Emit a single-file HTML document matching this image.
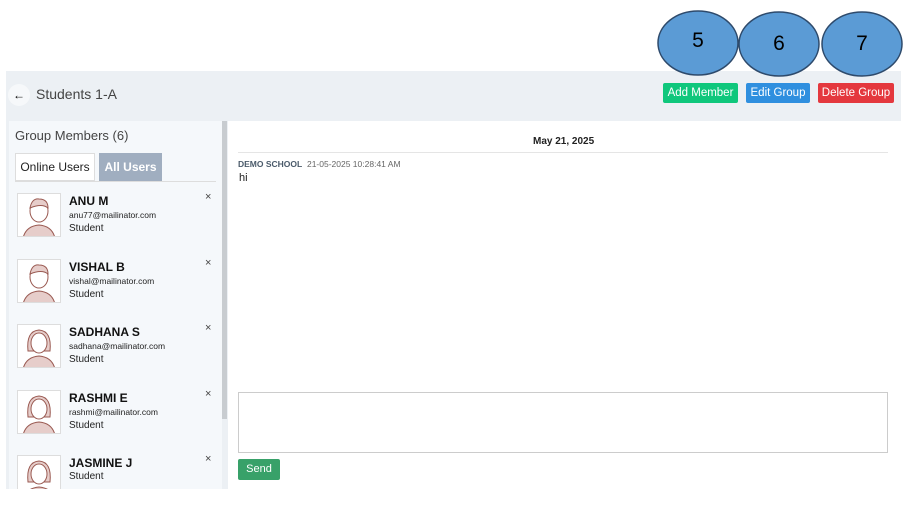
<!DOCTYPE html>
<html><head><style>
*{margin:0;padding:0;box-sizing:border-box}
body{width:911px;height:525px;background:#fff;font-family:"Liberation Sans",sans-serif;position:relative;overflow:hidden}
.a{position:absolute}
.btn{position:absolute;top:83px;height:20px;color:#fff;font-size:11.5px;line-height:20px;text-align:center;border-radius:2px}
.name{font-weight:bold;font-size:12px;color:#111}
.em{font-size:8.5px;color:#222}
.st{font-size:10px;color:#222}
.x{position:absolute;left:205px;font-size:11px;color:#444}
</style></head><body>
<div class="a" style="left:6px;top:71px;width:895px;height:418px;background:#ecf0f4"></div>
<div class="a" style="left:8px;top:84px;width:22px;height:22px;border-radius:50%;background:#f6f8fa;font-size:12px;text-align:center;line-height:22px">&#8592;</div>
<div class="a" style="left:36px;top:86px;font-size:14px;color:#444">Students 1-A</div>
<div class="btn" style="left:663px;width:75px;background:#0fc77c">Add Member</div>
<div class="btn" style="left:746px;width:64px;background:#2f8fdf">Edit Group</div>
<div class="btn" style="left:818px;width:76px;background:#e4383e">Delete Group</div>
<svg class="a" style="left:0;top:0" width="911" height="80">
<ellipse cx="698" cy="43" rx="40" ry="32" fill="#5b9bd5" stroke="#2e4a6b" stroke-width="1.5"/>
<ellipse cx="779" cy="44" rx="40" ry="32" fill="#5b9bd5" stroke="#2e4a6b" stroke-width="1.5"/>
<ellipse cx="862" cy="44" rx="40" ry="32" fill="#5b9bd5" stroke="#2e4a6b" stroke-width="1.5"/>
<text x="698" y="47" font-size="21" text-anchor="middle" font-family="Liberation Sans">5</text>
<text x="779" y="50" font-size="21" text-anchor="middle" font-family="Liberation Sans">6</text>
<text x="862" y="50" font-size="21" text-anchor="middle" font-family="Liberation Sans">7</text>
</svg>
<div class="a" style="left:9px;top:121px;width:213px;height:368px;background:#f5f8fb"></div>
<div class="a" style="left:222px;top:121px;width:5px;height:298px;background:#c8ccd0"></div>
<div class="a" style="left:228px;top:121px;width:673px;height:368px;background:#fff"></div>
<div class="a" style="left:15px;top:128px;font-size:13px;color:#444">Group Members (6)</div>
<div class="a" style="left:15px;top:153px;width:80px;height:28px;border:1px solid #ddd;background:#fff;font-size:12px;line-height:26px;text-align:center;color:#222">Online Users</div>
<div class="a" style="left:99px;top:153px;width:63px;height:28px;background:#a0aec0;color:#fff;font-weight:bold;font-size:12px;line-height:28px;text-align:center">All Users</div>
<div class="a" style="left:15px;top:181px;width:201px;height:1px;background:#ddd"></div>
<div id="list"></div>
<div class="a" style="left:533px;top:136px;font-size:10px;font-weight:bold;color:#222">May 21, 2025</div>
<div class="a" style="left:238px;top:152px;width:650px;height:1px;background:#e5e5e5"></div>
<div class="a" style="left:238px;top:159px;font-size:8.5px;color:#333"><b style="color:#4a5a6a">DEMO SCHOOL</b>&nbsp; <span style="color:#666">21-05-2025 10:28:41 AM</span></div>
<div class="a" style="left:239px;top:172px;font-size:11px;color:#222">hi</div>
<div class="a" style="left:238px;top:392px;width:650px;height:61px;border:1px solid #ccc"></div>
<div class="a" style="left:238px;top:459px;width:42px;height:21px;background:#38a169;color:#fff;font-size:11px;line-height:21px;text-align:center;border-radius:2px">Send</div>
<script>
var p=[["ANU M","anu77@mailinator.com",0],["VISHAL B","vishal@mailinator.com",0],["SADHANA S","sadhana@mailinator.com",1],["RASHMI E","rashmi@mailinator.com",1],["JASMINE J","",1]];
var h="";p.forEach(function(m,i){var y=193+i*65.5;
var av=m[2]?'<path d="M10 26 Q8 6 21 5 Q34 6 32 26 Z" fill="#e6cdca" stroke="#9a5a52"/><ellipse cx="21" cy="18" rx="8" ry="10" fill="#fff" stroke="#9a5a52"/><path d="M5 44 Q8 32 21 31 Q34 32 37 44" fill="#e6cdca" stroke="#9a5a52"/>':'<ellipse cx="21" cy="17" rx="9" ry="11" fill="#fff" stroke="#9a5a52"/><path d="M12 14 Q14 4 21 5 Q30 5 30 14 Q24 9 12 14Z" fill="#e6cdca" stroke="#9a5a52"/><path d="M5 44 Q8 32 21 31 Q34 32 37 44" fill="#e6cdca" stroke="#9a5a52"/>';
h+='<div class="a" style="left:17px;top:'+y+'px;width:44px;height:44px;background:#fff;border:1px solid #ddd"><svg width="42" height="42">'+av+'</svg></div>';
h+='<div class="a name" style="left:69px;top:'+(y+1)+'px">'+m[0]+'</div>';
if(m[1])h+='<div class="a em" style="left:69px;top:'+(y+17)+'px">'+m[1]+'</div><div class="a st" style="left:69px;top:'+(y+30)+'px">Student</div>';
else h+='<div class="a st" style="left:69px;top:'+(y+16)+'px">Student</div>';
h+='<div class="x" style="top:'+(y-2)+'px">&#215;</div>';});
document.getElementById("list").innerHTML=h;
</script>
<div class="a" style="left:0;top:489px;width:911px;height:36px;background:#fff"></div>
</body></html>
